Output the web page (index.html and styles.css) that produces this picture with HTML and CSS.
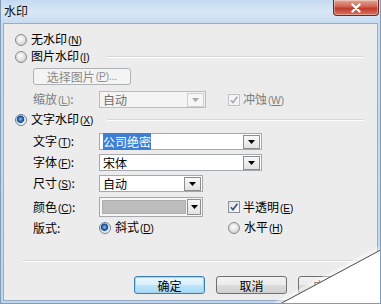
FILE: index.html
```html
<!DOCTYPE html>
<html>
<head>
<meta charset="utf-8">
<title>水印</title>
<link rel="stylesheet" href="styles.css">
</head>
<body>
<div class="win">
  <div class="titlebar">
    <span class="title">水印</span>
    <div class="close">
      <svg width="14" height="10" viewBox="0 0 14 10"><path d="M3.5 1.5 L10.5 8.5 M10.5 1.5 L3.5 8.5" stroke="#fff" stroke-width="2.4" stroke-linecap="round"/></svg>
    </div>
  </div>
  <div class="client">
    <div class="opt r1"><span class="radio"></span><span class="txt">无水印<span class="acc">(<u>N</u>)</span></span></div>
    <div class="opt r2"><span class="radio"></span><span class="txt">图片水印<span class="acc">(<u>I</u>)</span></span><span class="gline g1"></span></div>
    <div class="sub r3"><span class="btn dis">选择图片<span class="acc">(<u>P</u>)...</span></span></div>
    <div class="sub r4">
      <span class="lbl grey">缩放<span class="acc">(<u>L</u>)</span>:</span>
      <span class="fld"><span class="combo dis w-zoom"><span class="val">自动</span><span class="arr"><svg width="7" height="4" viewBox="0 0 7 4"><path d="M0 0H7L3.5 4Z" fill="#a8a8a8"/></svg></span></span></span>
      <span class="chk dis"><svg width="10" height="10" viewBox="0 0 10 10"><path d="M1.8 5.2 L4 7.6 L8.4 1.8" fill="none" stroke="#a4a9b3" stroke-width="1.6"/></svg></span>
      <span class="ctxt grey">冲蚀<span class="acc">(<u>W</u>)</span></span>
    </div>
    <div class="opt r5"><span class="radio on"></span><span class="txt">文字水印<span class="acc">(<u>X</u>)</span></span><span class="gline g2"></span></div>
    <div class="sub r6">
      <span class="lbl">文字<span class="acc">(<u>T</u>)</span>:</span>
      <span class="combo w-long"><span class="val"><span class="sel">公司绝密</span></span><span class="arr"><svg width="7" height="4" viewBox="0 0 7 4"><path d="M0 0H7L3.5 4Z" fill="#000"/></svg></span></span>
    </div>
    <div class="sub r7">
      <span class="lbl">字体<span class="acc">(<u>F</u>)</span>:</span>
      <span class="combo w-long"><span class="val">宋体</span><span class="arr"><svg width="7" height="4" viewBox="0 0 7 4"><path d="M0 0H7L3.5 4Z" fill="#000"/></svg></span></span>
    </div>
    <div class="sub r8">
      <span class="lbl">尺寸<span class="acc">(<u>S</u>)</span>:</span>
      <span class="combo w-size"><span class="val">自动</span><span class="arr"><svg width="7" height="4" viewBox="0 0 7 4"><path d="M0 0H7L3.5 4Z" fill="#000"/></svg></span></span>
    </div>
    <div class="sub r9">
      <span class="lbl">颜色<span class="acc">(<u>C</u>)</span>:</span>
      <span class="fld"><span class="combo color w-size"><span class="swatch"></span><span class="arr"><svg width="7" height="4" viewBox="0 0 7 4"><path d="M0 0H7L3.5 4Z" fill="#000"/></svg></span></span></span>
      <span class="chk"><svg width="10" height="10" viewBox="0 0 10 10"><path d="M1.8 5.2 L4 7.6 L8.4 1.8" fill="none" stroke="#3d5494" stroke-width="1.7"/></svg></span>
      <span class="ctxt">半透明<span class="acc">(<u>E</u>)</span></span>
    </div>
    <div class="sub r10">
      <span class="lbl">版式:</span>
      <span class="fld"><span class="radio on"></span><span class="txt">斜式<span class="acc">(<u>D</u>)</span></span></span>
      <span class="radio"></span><span class="txt">水平<span class="acc">(<u>H</u>)</span></span>
    </div>
    <div class="sep"></div>
    <div class="buttons">
      <span class="btn def">确定</span>
      <span class="btn">取消</span>
      <span class="btn apply">应用<span class="acc">(<u>A</u>)</span></span>
    </div>
  </div>
  <svg class="curl" width="381" height="304" viewBox="0 0 381 304">
    <defs>
      <linearGradient id="cg" x1="0" y1="0" x2="0.45" y2="-1" gradientUnits="objectBoundingBox">
        <stop offset="0" stop-color="#ffffff" stop-opacity="0.45"/>
        <stop offset="1" stop-color="#ffffff" stop-opacity="0"/>
      </linearGradient>
    </defs>
    <polygon points="381,245 381,249 278,304 270,304" fill="url(#cg)"/>
    <polygon points="381,249 381,304 278,304" fill="#ffffff"/>
    <line x1="381.5" y1="249" x2="278" y2="304.5" stroke="#4a4a4a" stroke-width="1"/>
  </svg>
</div>
</body>
</html>
```
FILE: styles.css
```css
* { box-sizing: border-box; }
html, body { margin: 0; padding: 0; background: #ffffff; }
body {
  font-family: "Noto Sans CJK SC", "Noto Sans", sans-serif;
  font-size: 12px;
  color: #000;
}
.win {
  position: relative;
  width: 381px;
  height: 304px;
  overflow: hidden;
  background: linear-gradient(#cadcf0, #c1d6ee);
  border: 1px solid #7f9db9;
  border-top: none;
  display: flex;
  flex-direction: column;
}
.titlebar {
  height: 23px;
  flex: none;
  display: flex;
  justify-content: space-between;
  align-items: flex-start;
  background: linear-gradient(#c4d9f0, #d9e7f5 50%, #c8dcf1);
}
.title {
  margin: 3px 0 0 3px;
  font-size: 12px;
  line-height: 16px;
  color: #111;
}
.close {
  width: 46px;
  height: 16px;
  margin-right: 1px;
  border: 1px solid #6b2a24;
  border-top: none;
  border-radius: 0 0 4px 4px;
  background: linear-gradient(#e6a797, #d0624f 45%, #c03a2b 55%, #d77560);
  display: flex;
  align-items: center;
  justify-content: center;
  box-shadow: inset 0 0 0 1px rgba(255,255,255,0.35);
}
.client {
  flex: 1;
  margin: 0 2px 2px 2px;
  background: #ececec;
  border: 1px solid #98aec6;
  padding: 9px 13px 0 11px;
  display: flex;
  flex-direction: column;
}
.opt, .sub {
  display: flex;
  align-items: center;
  flex: none;
}
.opt { height: 13px; }
.sub { margin-left: 18px; height: 17px; }
.r2 { margin-top: 4px; }
.r3 { margin-top: 5px; }
.r4 { margin-top: 6px; }
.r5 { margin-top: 5px; }
.r6 { margin-top: 7px; }
.r7 { margin-top: 4px; }
.r8 { margin-top: 4px; }
.r9 { margin-top: 5px; height: 20px; }
.r10 { margin-top: 4px; height: 13px; }

.txt, .lbl, .ctxt, .val, .btn {
  line-height: 13px;
  white-space: nowrap;
}
.acc {
  font-family: "Liberation Sans", sans-serif;
  font-size: 10px;
  margin-left: 1px;
}
.acc u { text-decoration-thickness: 1px; text-underline-offset: 1px; }
.grey { color: #7d7d7d; }

.radio {
  width: 12px;
  height: 12px;
  flex: none;
  border-radius: 50%;
  border: 1px solid #8a8a8a;
  background: radial-gradient(circle at 45% 40%, #ffffff 0, #f1f1f1 2px, #d2d2d2 6px);
  margin-right: 4px;
}
.radio.on {
  border-color: #6b7f99;
  background: radial-gradient(circle at 45% 42%, #9cc4ee 0, #3a72b8 1.8px, #1d4a8a 3.3px, #c8d4e2 4px, #f3f3f3 5px);
}
.gline {
  flex: 1;
  height: 2px;
  border-top: 1px solid #d3d9df;
  border-bottom: 1px solid #ffffff;
}
.g1 { margin-left: 18px; }
.g2 { margin-left: 14px; }

.lbl { width: 66px; flex: none; }
.fld { width: 129px; flex: none; display: flex; align-items: center; }

.combo {
  display: flex;
  align-items: center;
  justify-content: space-between;
  height: 17px;
  border: 1px solid #a5a9ae;
  background: #ffffff;
  padding: 0 1px 0 3px;
  flex: none;
}
.combo .val { flex: 1; }
.combo.dis { border-color: #b8bcc0; background: #f4f4f4; color: #6e6e6e; }
.w-long { width: 163px; }
.w-size { width: 104px; }
.w-zoom { width: 107px; }
.arr {
  width: 17px;
  height: 14px;
  flex: none;
  border: 1px solid #8d8d8d;
  background: linear-gradient(#f8f8f8, #e2e2e2);
  display: flex;
  align-items: center;
  justify-content: center;
}
.combo.dis .arr { border-color: #cfcfcf; background: #f6f6f6; }
.sel {
  background: #3d7fd6;
  color: #ffffff;
  padding: 0;
}
.combo.color { height: 20px; padding-left: 2px; background: #f7f7f7; }
.swatch {
  width: 84px;
  height: 14px;
  background: #bdbdbd;
  border: 1px solid #adadad;
}
.combo.color .arr { height: 16px; width: 14px; }

.chk {
  width: 12px;
  height: 12px;
  flex: none;
  border: 1px solid #8e8f8f;
  background: linear-gradient(135deg, #e2e2e2, #fbfbfb);
  display: flex;
  align-items: center;
  justify-content: center;
  margin-right: 3px;
}
.chk.dis { border-color: #c3c3c3; background: #f4f4f4; }

.btn {
  display: flex;
  align-items: center;
  justify-content: center;
  height: 17px;
  border: 1px solid #707070;
  border-radius: 3px;
  background: linear-gradient(#f2f2f2, #ebebeb 50%, #dddddd 50%, #cfcfcf);
  flex: none;
}
.btn.dis {
  width: 98px;
  border-color: #adb2b5;
  background: #f4f4f4;
  color: #8a8a8a;
}
.sep {
  margin: 26px -2px 0 8px;
  height: 2px;
  border-top: 1px solid #d5d5d5;
  border-bottom: 1px solid #ffffff;
  flex: none;
}
.buttons {
  display: flex;
  gap: 11px;
  margin: 14px 0 0 119px;
  flex: none;
}
.buttons .btn { width: 71px; height: 18px; }
.buttons .btn.apply { justify-content: flex-start; padding-left: 14px; }
.btn.def {
  border-color: #3c7fb1;
  box-shadow: inset 0 0 0 1px #a6d3f1;
  background: linear-gradient(#eaf6fd, #d9f0fc 50%, #bee6fd 50%, #a7d9f5);
}
.curl {
  position: absolute;
  left: 0;
  top: 0;
  pointer-events: none;
}
```
